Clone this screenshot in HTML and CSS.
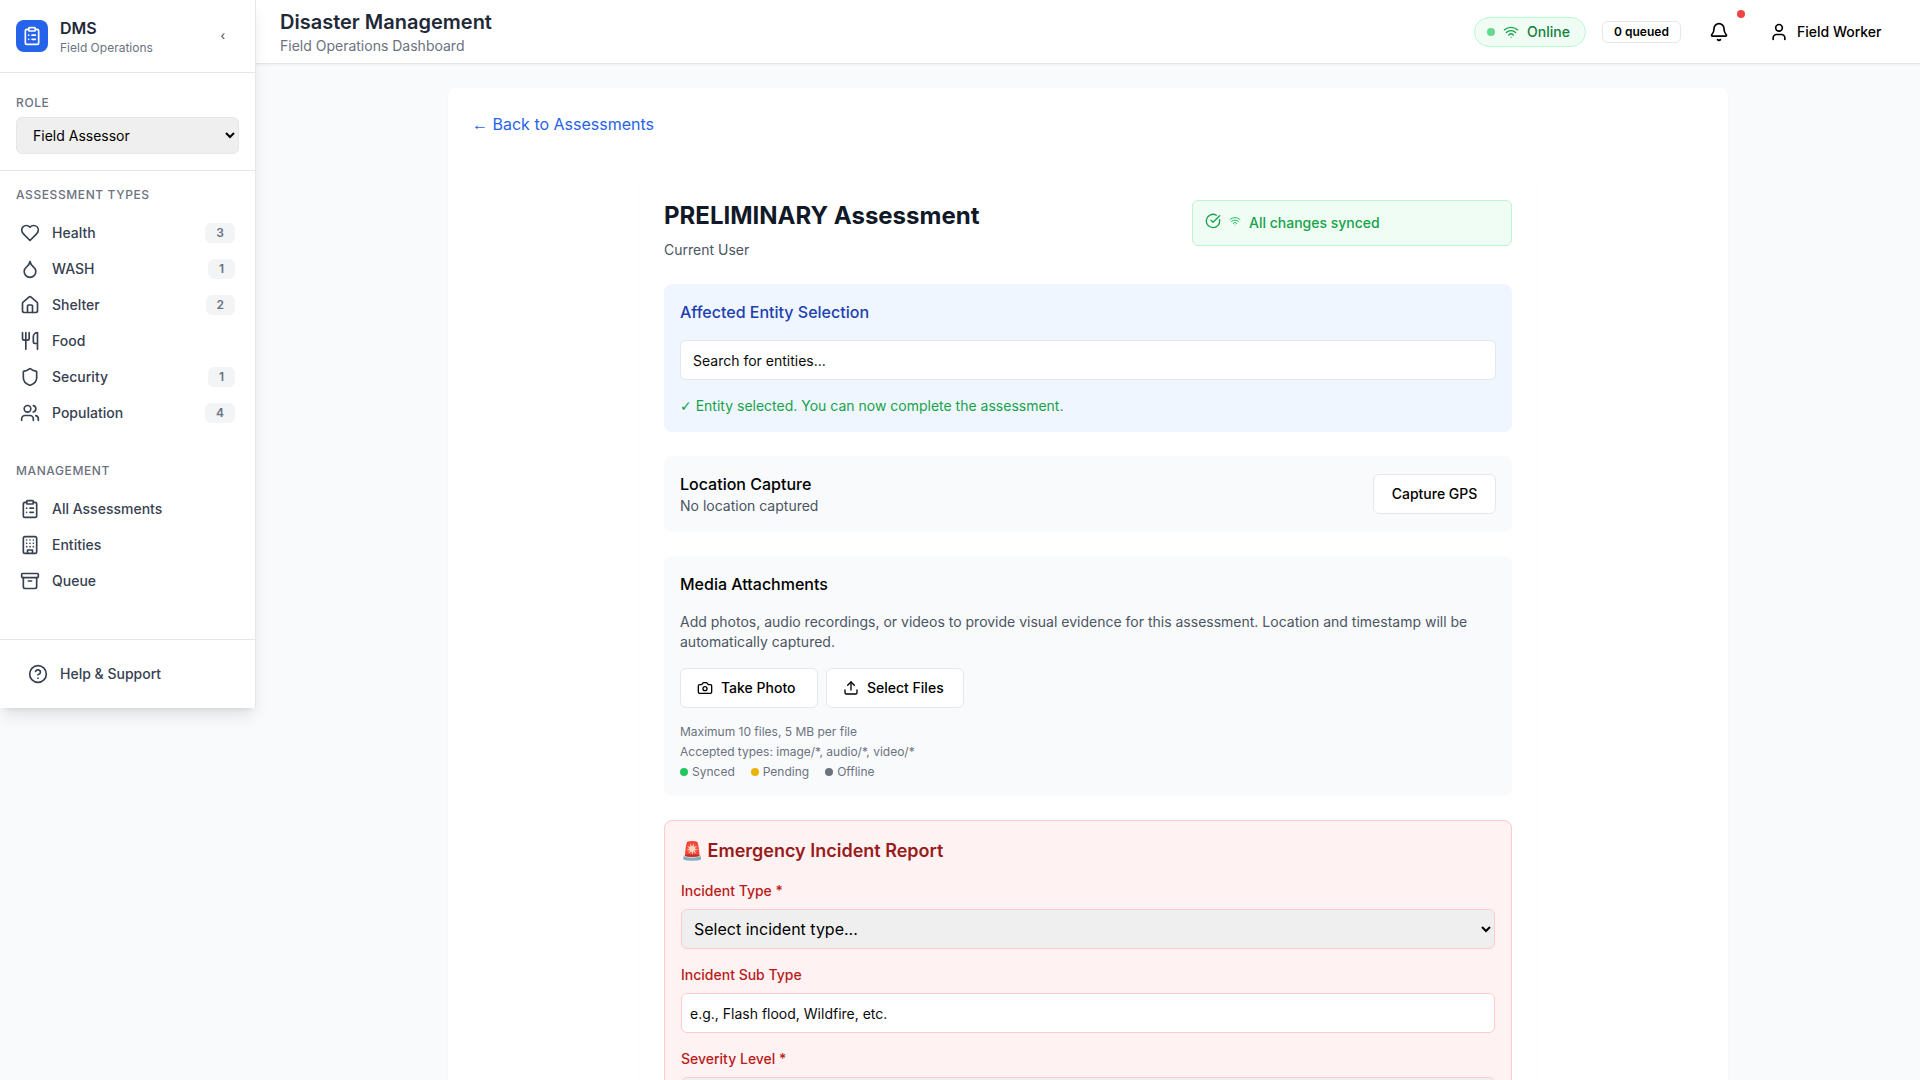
FILE: index.html
```html
<!DOCTYPE html>
<html lang="en">
<head>
  <meta charset="utf-8">
  <meta name="viewport" content="width=device-width, initial-scale=1">
  <title>Disaster Management</title>
  <link rel="stylesheet" href="styles.css">
</head>
<body>
  <svg class="sprite" aria-hidden="true">
    <symbol id="clipboard-list" viewBox="0 0 24 24"><rect width="8" height="4" x="8" y="2" rx="1" ry="1"/><path d="M16 4h2a2 2 0 0 1 2 2v14a2 2 0 0 1-2 2H6a2 2 0 0 1-2-2V6a2 2 0 0 1 2-2h2"/><path d="M12 11h4"/><path d="M12 16h4"/><path d="M8 11h.01"/><path d="M8 16h.01"/></symbol>
    <symbol id="heart" viewBox="0 0 24 24"><path d="M19 14c1.49-1.46 3-3.21 3-5.5A5.5 5.5 0 0 0 16.5 3c-1.76 0-3 .5-4.5 2-1.5-1.5-2.74-2-4.5-2A5.5 5.5 0 0 0 2 8.5c0 2.3 1.5 4.05 3 5.5l7 7Z"/></symbol>
    <symbol id="droplet" viewBox="0 0 24 24"><path d="M12 22a7 7 0 0 0 7-7c0-2-1-3.9-3-5.5s-3.5-4-4-6.5c-.5 2.5-2 4.9-4 6.5C6 11.1 5 13 5 15a7 7 0 0 0 7 7z"/></symbol>
    <symbol id="house" viewBox="0 0 24 24"><path d="M15 21v-8a1 1 0 0 0-1-1h-4a1 1 0 0 0-1 1v8"/><path d="M3 10a2 2 0 0 1 .709-1.528l7-5.999a2 2 0 0 1 2.582 0l7 5.999A2 2 0 0 1 21 10v9a2 2 0 0 1-2 2H5a2 2 0 0 1-2-2z"/></symbol>
    <symbol id="utensils" viewBox="0 0 24 24"><path d="M3 2v7c0 1.100.9 2 2 2h4a2 2 0 0 0 2-2V2"/><path d="M7 2v20"/><path d="M21 15V2a5 5 0 0 0-5 5v6c0 1.100.9 2 2 2h3Zm0 0v7"/></symbol>
    <symbol id="shield" viewBox="0 0 24 24"><path d="M20 13c0 5-3.500 7.500-7.660 8.950a1 1 0 0 1-.67-.01C7.500 20.500 4 18 4 13V6a1 1 0 0 1 1-1c2 0 4.500-1.200 6.240-2.720a1.170 1.170 0 0 1 1.520 0C14.510 3.810 17 5 19 5a1 1 0 0 1 1 1z"/></symbol>
    <symbol id="users" viewBox="0 0 24 24"><path d="M16 21v-2a4 4 0 0 0-4-4H6a4 4 0 0 0-4 4v2"/><circle cx="9" cy="7" r="4"/><path d="M22 21v-2a4 4 0 0 0-3-3.870"/><path d="M16 3.130a4 4 0 0 1 0 7.750"/></symbol>
    <symbol id="building" viewBox="0 0 24 24"><rect width="16" height="20" x="4" y="2" rx="2" ry="2"/><path d="M9 22v-4h6v4"/><path d="M8 6h.01M16 6h.01M12 6h.01M12 10h.01M12 14h.01M16 10h.01M16 14h.01M8 10h.01M8 14h.01"/></symbol>
    <symbol id="archive" viewBox="0 0 24 24"><rect width="20" height="5" x="2" y="3" rx="1"/><path d="M4 8v11a2 2 0 0 0 2 2h12a2 2 0 0 0 2-2V8"/><path d="M10 12h4"/></symbol>
    <symbol id="help" viewBox="0 0 24 24"><circle cx="12" cy="12" r="10"/><path d="M9.090 9a3 3 0 0 1 5.830 1c0 2-3 3-3 3"/><path d="M12 17h.01"/></symbol>
    <symbol id="wifi" viewBox="0 0 24 24"><path d="M12 20h.01"/><path d="M2 8.820a15 15 0 0 1 20 0"/><path d="M5 12.859a10 10 0 0 1 14 0"/><path d="M8.500 16.429a5 5 0 0 1 7 0"/></symbol>
    <symbol id="bell" viewBox="0 0 24 24"><path d="M10.268 21a2 2 0 0 0 3.464 0"/><path d="M3.262 15.326A1 1 0 0 0 4 17h16a1 1 0 0 0 .74-1.673C19.410 13.956 18 12.499 18 8A6 6 0 0 0 6 8c0 4.499-1.411 5.956-2.738 7.326"/></symbol>
    <symbol id="user" viewBox="0 0 24 24"><path d="M19 21v-2a4 4 0 0 0-4-4H9a4 4 0 0 0-4 4v2"/><circle cx="12" cy="7" r="4"/></symbol>
    <symbol id="check" viewBox="0 0 24 24"><path d="M21.801 10A10 10 0 1 1 17 3.335"/><path d="m9 11 3 3L22 4"/></symbol>
    <symbol id="camera" viewBox="0 0 24 24"><path d="M14.500 4h-5L7 7H4a2 2 0 0 0-2 2v9a2 2 0 0 0 2 2h16a2 2 0 0 0 2-2V9a2 2 0 0 0-2-2h-3l-2.500-3z"/><circle cx="12" cy="13" r="3"/></symbol>
    <symbol id="upload" viewBox="0 0 24 24"><path d="M12 3v12"/><path d="m17 8-5-5-5 5"/><path d="M21 15v4a2 2 0 0 1-2 2H5a2 2 0 0 1-2-2v-4"/></symbol>
  </svg>

  <div class="shell">
    <aside class="sidebar">
      <div class="brand">
        <span class="brand-logo"><svg class="icon"><use href="#clipboard-list"/></svg></span>
        <div class="brand-text">
          <p class="brand-name">DMS</p>
          <p class="brand-sub">Field Operations</p>
        </div>
        <button class="collapse" type="button" aria-label="Collapse sidebar">‹</button>
      </div>
      <div class="role">
        <label class="overline" for="role">Role</label>
        <select class="role-select" id="role"><option>Field Assessor</option></select>
      </div>
      <nav class="nav">
        <section class="nav-group">
          <h2 class="overline">Assessment Types</h2>
          <ul class="nav-list">
            <li><a class="nav-item" href="#"><svg class="icon"><use href="#heart"/></svg><span class="nav-label">Health</span><span class="count">3</span></a></li>
            <li><a class="nav-item" href="#"><svg class="icon"><use href="#droplet"/></svg><span class="nav-label">WASH</span><span class="count">1</span></a></li>
            <li><a class="nav-item" href="#"><svg class="icon"><use href="#house"/></svg><span class="nav-label">Shelter</span><span class="count">2</span></a></li>
            <li><a class="nav-item" href="#"><svg class="icon"><use href="#utensils"/></svg><span class="nav-label">Food</span></a></li>
            <li><a class="nav-item" href="#"><svg class="icon"><use href="#shield"/></svg><span class="nav-label">Security</span><span class="count">1</span></a></li>
            <li><a class="nav-item" href="#"><svg class="icon"><use href="#users"/></svg><span class="nav-label">Population</span><span class="count">4</span></a></li>
          </ul>
        </section>
        <section class="nav-group">
          <h2 class="overline">Management</h2>
          <ul class="nav-list">
            <li><a class="nav-item" href="#"><svg class="icon"><use href="#clipboard-list"/></svg><span class="nav-label">All Assessments</span></a></li>
            <li><a class="nav-item" href="#"><svg class="icon"><use href="#building"/></svg><span class="nav-label">Entities</span></a></li>
            <li><a class="nav-item" href="#"><svg class="icon"><use href="#archive"/></svg><span class="nav-label">Queue</span></a></li>
          </ul>
        </section>
      </nav>
      <div class="sidebar-foot">
        <a class="nav-item help-item" href="#"><svg class="icon"><use href="#help"/></svg><span class="nav-label">Help &amp; Support</span></a>
      </div>
    </aside>

    <div class="page">
      <header class="topbar">
        <div>
          <p class="app-title">Disaster Management</p>
          <p class="app-sub">Field Operations Dashboard</p>
        </div>
        <div class="topbar-tools">
          <span class="online"><span class="dot dot-live"></span><svg class="icon icon-sm"><use href="#wifi"/></svg><span>Online</span></span>
          <span class="queued">0 queued</span>
          <button class="ghost bell" type="button" aria-label="Notifications"><svg class="icon"><use href="#bell"/></svg><span class="dot bell-dot"></span></button>
          <button class="ghost account" type="button"><svg class="icon"><use href="#user"/></svg>Field Worker</button>
        </div>
      </header>

      <main class="content">
        <div class="panel">
          <a class="back" href="#"><span class="arrow">←</span> Back to Assessments</a>
          <form class="form-card">
            <div class="form-head">
              <div>
                <h1 class="form-title">PRELIMINARY Assessment</h1>
                <p class="muted">Current User</p>
              </div>
              <div class="sync"><span class="sync-icons"><svg class="icon icon-sm"><use href="#check"/></svg><svg class="icon icon-xs"><use href="#wifi"/></svg></span><span>All changes synced</span></div>
            </div>

            <section class="box box-blue">
              <h2 class="box-title"><label for="entity">Affected Entity Selection</label></h2>
              <input class="field field-entity" id="entity" type="text" placeholder="Search for entities...">
              <p class="ok"><span class="tick">✓</span> Entity selected. You can now complete the assessment.</p>
            </section>

            <section class="box box-row">
              <div>
                <h2 class="box-title">Location Capture</h2>
                <p class="muted">No location captured</p>
              </div>
              <button class="btn btn-gps" type="button">Capture GPS</button>
            </section>

            <section class="box">
              <h2 class="box-title">Media Attachments</h2>
              <p class="muted">Add photos, audio recordings, or videos to provide visual evidence for this assessment. Location and timestamp will be automatically captured.</p>
              <div class="btn-row">
                <button class="btn" type="button"><svg class="icon icon-sm"><use href="#camera"/></svg>Take Photo</button>
                <button class="btn" type="button"><svg class="icon icon-sm"><use href="#upload"/></svg>Select Files</button>
              </div>
              <div class="notes">
                <p>Maximum 10 files, 5 MB per file</p>
                <p>Accepted types: image/*, audio/*, video/*</p>
                <ul class="legend">
                  <li><span class="dot dot-synced"></span>Synced</li>
                  <li><span class="dot dot-pending"></span>Pending</li>
                  <li><span class="dot dot-offline"></span>Offline</li>
                </ul>
              </div>
            </section>

            <section class="box box-red">
              <h2 class="report-title">🚨 Emergency Incident Report</h2>
              <div class="form-row">
                <label for="type">Incident Type *</label>
                <select class="field" id="type"><option>Select incident type...</option></select>
              </div>
              <div class="form-row">
                <label for="subtype">Incident Sub Type</label>
                <input class="field" id="subtype" type="text" placeholder="e.g., Flash flood, Wildfire, etc.">
              </div>
              <div class="form-row">
                <label for="severity">Severity Level *</label>
                <select class="field" id="severity"><option>Select severity...</option></select>
              </div>
            </section>
          </form>
        </div>
      </main>
    </div>
  </div>
</body>
</html>
```
FILE: styles.css
```css
* {
  box-sizing: border-box;
}

body {
  margin: 0;
  background: #f9fafb;
  color: #000;
  font-family: Inter, "Liberation Sans", sans-serif;
  font-size: 14px;
  line-height: 20px;
}

h1, h2, p, ul {
  margin: 0;
  padding: 0;
}

ul {
  list-style: none;
}

a {
  text-decoration: none;
}

button, input, select {
  font-family: inherit;
}

.sprite {
  display: none;
}

.icon {
  flex: none;
  width: 20px;
  height: 20px;
  fill: none;
  stroke: currentColor;
  stroke-width: 2;
  stroke-linecap: round;
  stroke-linejoin: round;
}

.icon-sm {
  width: 16px;
  height: 16px;
}

.icon-xs {
  width: 12px;
  height: 12px;
}

.dot {
  flex: none;
  width: 8px;
  height: 8px;
  border-radius: 50%;
}

.shell {
  display: flex;
  align-items: flex-start;
  min-height: 100vh;
}

/* Sidebar */

.sidebar {
  position: relative;
  z-index: 1;
  flex: none;
  width: 256px;
  background: #fff;
  border-right: 1px solid #e5e7eb;
  box-shadow: 0 10px 15px -3px rgba(0, 0, 0, 0.1), 0 4px 6px -4px rgba(0, 0, 0, 0.1);
}

.brand {
  display: flex;
  align-items: center;
  gap: 12px;
  padding: 16px;
  border-bottom: 1px solid #e5e7eb;
}

.brand-logo {
  display: grid;
  place-items: center;
  width: 32px;
  height: 32px;
  border-radius: 8px;
  background: #2563eb;
  color: #fff;
}

.brand-text {
  flex: 1;
}

.brand-name {
  color: #1f2937;
  font-size: 16px;
  font-weight: 600;
  line-height: 24px;
}

.brand-sub {
  color: #6b7280;
  font-size: 12px;
  line-height: 16px;
}

.collapse {
  padding: 8px 14px;
  border: 0;
  background: none;
  color: #374151;
  font-size: 12px;
  line-height: 16px;
}

.role {
  display: flex;
  flex-direction: column;
  gap: 6px;
  padding: 22px 16px 16px;
  border-bottom: 1px solid #e5e7eb;
}

.overline {
  color: #6b7280;
  font-size: 12px;
  font-weight: 500;
  line-height: 16px;
  letter-spacing: 0.05em;
  text-transform: uppercase;
}

.role-select {
  width: 100%;
  height: 37px;
  padding: 8px 12px;
  border: 1px solid #e5e7eb;
  border-radius: 6px;
  background: #efefef;
  color: #000;
  font-size: 14px;
}

.nav {
  display: flex;
  flex-direction: column;
  gap: 32px;
  padding: 16px 16px 40px;
}

.nav-group {
  display: flex;
  flex-direction: column;
  gap: 12px;
}

.nav-item {
  display: flex;
  align-items: center;
  gap: 12px;
  height: 36px;
  padding: 0 4px;
  border-radius: 6px;
  color: #374151;
  font-weight: 500;
}

.nav-label {
  flex: 1;
}

.count {
  padding: 2px 11px;
  border-radius: 6px;
  background: #f3f4f6;
  color: #6b7280;
  font-size: 12px;
  font-weight: 600;
  line-height: 16px;
}

.sidebar-foot {
  padding: 16px;
  border-top: 1px solid #e5e7eb;
}

.help-item {
  padding: 0 12px;
}

/* Top bar */

.page {
  flex: 1;
  min-width: 0;
}

.topbar {
  display: flex;
  align-items: center;
  justify-content: space-between;
  height: 64px;
  padding: 0 24px;
  background: #fff;
  border-bottom: 1px solid #e5e7eb;
  box-shadow: 0 1px 2px rgba(0, 0, 0, 0.05);
}

.app-title {
  color: #1f2937;
  font-size: 20px;
  font-weight: 600;
  line-height: 28px;
}

.app-sub {
  color: #6b7280;
}

.topbar-tools {
  display: flex;
  align-items: center;
  gap: 16px;
}

.online {
  display: flex;
  align-items: center;
  gap: 8px;
  min-width: 112px;
  padding: 4px 12px;
  border: 1px solid #bbf7d0;
  border-radius: 15px;
  background: #f0fdf4;
  color: #15803d;
  font-weight: 500;
}

.online .icon {
  color: #16a34a;
}

.dot-live {
  background: #64d98e;
}

.queued {
  min-width: 79px;
  padding: 2px 10px;
  border: 1px solid #e5e7eb;
  border-radius: 6px;
  font-size: 12px;
  font-weight: 600;
  line-height: 16px;
  text-align: center;
}

.ghost {
  position: relative;
  display: flex;
  align-items: center;
  gap: 8px;
  height: 36px;
  padding: 0 12px;
  border: 0;
  background: none;
  color: #000;
  font-size: 14px;
  font-weight: 500;
  line-height: 20px;
}

.account {
  min-width: 139px;
}

.bell-dot {
  position: absolute;
  top: -4px;
  right: -4px;
  background: #ef4444;
}

/* Content */

.content {
  padding: 24px;
}

.panel {
  display: flex;
  flex-direction: column;
  align-items: flex-start;
  gap: 40px;
  max-width: 1280px;
  margin: 0 auto;
  padding: 24px;
  border-radius: 8px;
  background: #fff;
  box-shadow: 0 1px 2px rgba(0, 0, 0, 0.05);
}

.back {
  color: #2563eb;
  font-size: 16px;
  line-height: 24px;
}

.arrow {
  font-family: "Liberation Sans", sans-serif;
  line-height: 1;
}

.tick {
  font-family: "DejaVu Sans", sans-serif;
  line-height: 1;
}

.form-card {
  display: flex;
  flex-direction: column;
  gap: 24px;
  width: 100%;
  max-width: 896px;
  margin: 0 auto;
  padding: 24px;
  border-radius: 8px;
  background: #fff;
  box-shadow: 0 1px 2px rgba(0, 0, 0, 0.05);
}

.form-head {
  display: flex;
  align-items: flex-start;
  justify-content: space-between;
}

.form-title {
  margin-bottom: 8px;
  color: #111827;
  font-size: 24px;
  font-weight: 700;
  line-height: 32px;
}

.muted {
  color: #4b5563;
}

.sync {
  display: flex;
  align-items: flex-start;
  gap: 8px;
  width: 320px;
  padding: 12px;
  border: 1px solid #bbf7d0;
  border-radius: 6px;
  background: #f0fdf4;
  color: #16a34a;
  font-weight: 500;
}

.sync-icons {
  display: flex;
  align-items: center;
  gap: 8px;
}

.sync .icon-xs {
  color: #22c55e;
}

.box {
  display: flex;
  flex-direction: column;
  gap: 16px;
  padding: 16px;
  border-radius: 8px;
  background: #f9fafb;
}

.box-row {
  flex-direction: row;
  align-items: center;
  justify-content: space-between;
}

.box-title {
  font-size: 16px;
  font-weight: 500;
  line-height: 24px;
}

.box-blue {
  background: #eff6ff;
}

.box-blue .box-title {
  color: #1e40af;
}

.field {
  width: 100%;
  height: 40px;
  padding: 8px;
  border: 1px solid #fecaca;
  border-radius: 6px;
  background: #fff;
  color: #000;
  font-size: 14px;
}

.field::placeholder {
  color: #0a0a0a;
  opacity: 1;
}

.field-entity {
  padding: 8px 12px;
  border-color: #e5e7eb;
}

select.field {
  background: #efefef;
  font-size: 16px;
}

.ok {
  color: #16a34a;
}

.btn {
  display: inline-flex;
  align-items: center;
  gap: 8px;
  min-width: 138px;
  height: 40px;
  padding: 0 16px;
  border: 1px solid #e5e7eb;
  border-radius: 6px;
  background: #fff;
  color: #000;
  font-size: 14px;
  font-weight: 500;
  line-height: 20px;
}

.btn-gps {
  justify-content: center;
  min-width: 123px;
}

.btn-row {
  display: flex;
  gap: 8px;
}

.notes {
  display: flex;
  flex-direction: column;
  gap: 4px;
  color: #6b7280;
  font-size: 12px;
  line-height: 16px;
}

.legend {
  display: flex;
  gap: 16px;
}

.legend li {
  display: flex;
  align-items: center;
  gap: 4px;
}

.dot-synced {
  background: #22c55e;
}

.dot-pending {
  background: #eab308;
}

.dot-offline {
  background: #6b7280;
}

.box-red {
  border: 1px solid #fecaca;
  background: #fef2f2;
}

.report-title {
  color: #991b1b;
  font-size: 18px;
  font-weight: 600;
  line-height: 28px;
}

.form-row {
  display: flex;
  flex-direction: column;
  gap: 8px;
  color: #b91c1c;
  font-weight: 500;
}
```
